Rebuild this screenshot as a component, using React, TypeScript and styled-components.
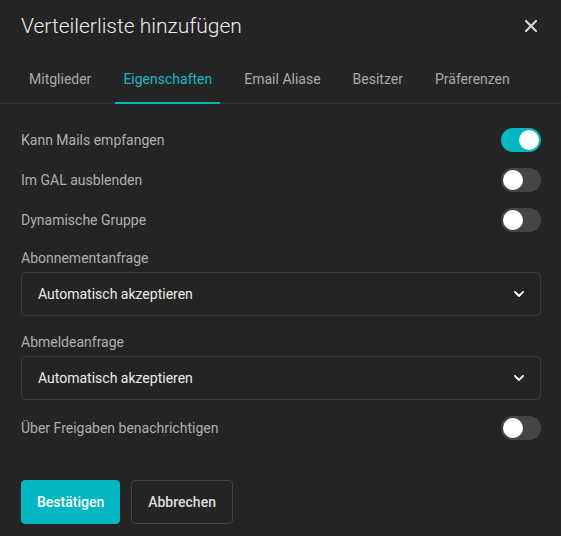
import React, { useState } from "react";
import styled, { createGlobalStyle } from "styled-components";

const Global = createGlobalStyle`
  html, body { margin: 0; padding: 0; background: #242424; }
  body { font-family: Roboto, "Noto Sans", Arial, sans-serif; -webkit-font-smoothing: antialiased; }
  * { box-sizing: border-box; }
`;

const ACCENT = "#00b7c3";

const Dialog = styled.div`
  width: 561px;
  height: 536px;
  background: #242424;
  display: flex;
  flex-direction: column;
  overflow: hidden;
`;

const Header = styled.div`
  display: flex;
  align-items: center;
  justify-content: space-between;
  padding: 12px 20px 12px 21px;
  height: 52px;
`;

const Title = styled.h2`
  margin: 0;
  font-size: 21px;
  font-weight: 300;
  line-height: 28px;
  color: #ececec;
`;

const CloseButton = styled.button`
  background: none;
  border: none;
  padding: 0;
  width: 20px;
  height: 20px;
  display: flex;
  align-items: center;
  justify-content: center;
  color: #d8d8d8;
  cursor: pointer;
`;

const TabList = styled.div`
  display: flex;
  gap: 16px;
  padding: 0 21px;
  border-bottom: 1px solid #333333;
`;

const Tab = styled.button<{ $active?: boolean }>`
  background: none;
  border: none;
  border-bottom: 2px solid ${(p) => (p.$active ? ACCENT : "transparent")};
  margin-bottom: -1px;
  padding: 17px 8px 13px;
  font-family: inherit;
  font-size: 14px;
  line-height: 20px;
  color: ${(p) => (p.$active ? "#19b9c6" : "#aaaaaa")};
  cursor: pointer;
`;

const Content = styled.div`
  display: flex;
  flex-direction: column;
  gap: 16px;
  padding: 24px 20px 0 21px;
`;

const ToggleRow = styled.div`
  display: flex;
  align-items: center;
  justify-content: space-between;
  height: 24px;
`;

const Label = styled.span`
  font-size: 14px;
  line-height: 20px;
  color: #b0b0b0;
`;

const Track = styled.button<{ $on: boolean }>`
  position: relative;
  width: 40px;
  height: 24px;
  border-radius: 12px;
  border: none;
  padding: 0;
  background: ${(p) => (p.$on ? ACCENT : "#454545")};
  cursor: pointer;
`;

const Knob = styled.span<{ $on: boolean }>`
  position: absolute;
  top: 2px;
  left: ${(p) => (p.$on ? "18px" : "2px")};
  width: 20px;
  height: 20px;
  border-radius: 50%;
  background: #ffffff;
`;

const Field = styled.div`
  display: flex;
  flex-direction: column;
  gap: 4px;
`;

const Select = styled.div`
  height: 44px;
  border: 1px solid #3a3a3a;
  border-radius: 4px;
  display: flex;
  align-items: center;
  justify-content: space-between;
  padding: 0 16px;
  font-size: 14px;
  color: #ececec;
`;

const Footer = styled.div`
  display: flex;
  gap: 11px;
  padding: 40px 21px 12px;
`;

const Button = styled.button<{ $primary?: boolean }>`
  height: 44px;
  padding: 0 ${(p) => (p.$primary ? "15px" : "16px")};
  border-radius: 4px;
  border: 1px solid ${(p) => (p.$primary ? ACCENT : "#444444")};
  background: ${(p) => (p.$primary ? ACCENT : "transparent")};
  color: ${(p) => (p.$primary ? "#ffffff" : "#dddddd")};
  font-family: inherit;
  font-size: 14px;
  font-weight: 500;
  cursor: pointer;
`;

function Toggle({ on }: { on: boolean }) {
  const [v, setV] = useState(on);
  return (
    <Track $on={v} onClick={() => setV(!v)}>
      <Knob $on={v} />
    </Track>
  );
}

const Chevron = () => (
  <svg width="10" height="6" viewBox="0 0 10 6" fill="none">
    <path d="M1 1l4 4 4-4" stroke="#ffffff" strokeWidth="1.8" strokeLinecap="round" strokeLinejoin="round" />
  </svg>
);

const tabs = ["Mitglieder", "Eigenschaften", "Email Aliase", "Besitzer", "Präferenzen"];

export default function App() {
  return (
    <Dialog>
      <Global />
      <Header>
        <Title>Verteilerliste hinzufügen</Title>
        <CloseButton aria-label="close">
          <svg width="14" height="14" viewBox="0 0 14 14">
            <path d="M2 2l10 10M12 2L2 12" stroke="currentColor" strokeWidth="2.2" strokeLinecap="round" />
          </svg>
        </CloseButton>
      </Header>
      <TabList>
        {tabs.map((t) => (
          <Tab key={t} $active={t === "Eigenschaften"}>
            {t}
          </Tab>
        ))}
      </TabList>
      <Content>
        <ToggleRow>
          <Label>Kann Mails empfangen</Label>
          <Toggle on />
        </ToggleRow>
        <ToggleRow>
          <Label>Im GAL ausblenden</Label>
          <Toggle on={false} />
        </ToggleRow>
        <ToggleRow>
          <Label>Dynamische Gruppe</Label>
          <Toggle on={false} />
        </ToggleRow>
        <Field>
          <Label>Abonnementanfrage</Label>
          <Select>
            Automatisch akzeptieren
            <Chevron />
          </Select>
        </Field>
        <Field>
          <Label>Abmeldeanfrage</Label>
          <Select>
            Automatisch akzeptieren
            <Chevron />
          </Select>
        </Field>
        <ToggleRow>
          <Label>Über Freigaben benachrichtigen</Label>
          <Toggle on={false} />
        </ToggleRow>
      </Content>
      <Footer>
        <Button $primary>Bestätigen</Button>
        <Button>Abbrechen</Button>
      </Footer>
    </Dialog>
  );
}
